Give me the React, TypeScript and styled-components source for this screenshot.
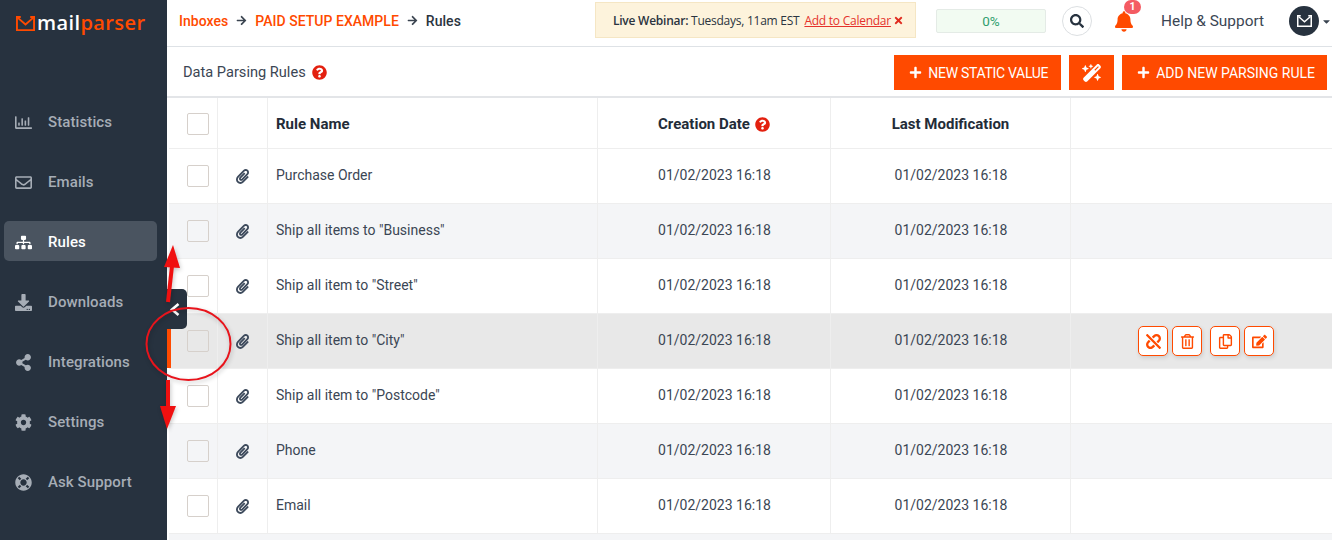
import React from "react";
import styled, { createGlobalStyle } from "styled-components";
import {
  FaArrowRight,
  FaBell,
  FaDownload,
  FaEdit,
  FaLifeRing,
  FaPaperclip,
  FaPlus,
  FaQuestionCircle,
  FaRegChartBar,
  FaRegCopy,
  FaRegEnvelope,
  FaRegTrashAlt,
  FaSearch,
  FaShareAlt,
  FaCog,
  FaSitemap,
  FaTimes,
  FaUnlink,
  FaCaretDown,
} from "react-icons/fa";
import { FaWandMagicSparkles } from "react-icons/fa6";

const orange = "#ff4a00";
const navy = "#27323f";

const Global = createGlobalStyle`
  html, body { margin: 0; padding: 0; height: 540px; overflow: hidden; background: #fff; }
  * { box-sizing: border-box; }
  body { font-family: Roboto, "Liberation Sans", sans-serif; color: #2b3440; }
`;

const Page = styled.div`
  position: relative;
  display: flex;
  width: 1332px;
  height: 540px;
  overflow: hidden;
`;

const Sidebar = styled.aside`
  flex: 0 0 167px;
  background: ${navy};
  display: flex;
  flex-direction: column;
`;

const LogoRow = styled.div`
  height: 101px;
  padding: 12px 0 0 16px;
  display: flex;
  align-items: flex-start;
  gap: 2px;
  svg { margin-top: 4px; }
`;

const LogoText = styled.div`
  font-family: "Open Sans", sans-serif;
  font-size: 20px;
  font-weight: 600;
  line-height: 22px;
  letter-spacing: 0.4px;
  color: #fff;
  span { color: ${orange}; }
`;

const Nav = styled.nav`
  display: flex;
  flex-direction: column;
  gap: 20px;
  padding: 0 10px 0 4px;
`;

const NavItem = styled.div<{ $active?: boolean }>`
  height: 40px;
  display: flex;
  align-items: center;
  gap: 16px;
  padding: 2px 0 0 11px;
  border-radius: 5px;
  font-size: 15px;
  font-weight: 500;
  letter-spacing: 0.1px;
  color: ${(p) => (p.$active ? "#fff" : "#a6adb6")};
  background: ${(p) => (p.$active ? "#4a5460" : "transparent")};
  svg { width: 17px; height: 17px; flex: none; }
`;

const Main = styled.main`
  flex: 1;
  min-width: 0;
  display: flex;
  flex-direction: column;
`;

const TopBar = styled.header`
  flex: none;
  height: 47px;
  display: flex;
  align-items: center;
  border-bottom: 1px solid #dee2e6;
  padding-left: 12px;
`;

const Crumbs = styled.div`
  display: flex;
  align-items: center;
  gap: 8px;
  width: 416px;
  margin-top: -5px;
  font-size: 14px;
  font-weight: 500;
  letter-spacing: 0.03px;
  color: ${orange};
  svg { width: 11px; height: 11px; color: #3a4450; }
  b { font-weight: 500; color: #2b3440; }
`;

const Webinar = styled.div`
  width: 321px;
  height: 36px;
  margin-top: -6px;
  display: flex;
  align-items: center;
  padding-left: 17px;
  background: #fdf3dc;
  border: 1px solid #f5e6c4;
  font-family: "Open Sans", sans-serif;
  font-size: 12px;
  letter-spacing: -0.25px;
  white-space: nowrap;
  b { font-weight: 600; }
  a { margin-left: 5px; color: #e5322c; text-decoration: underline; }
  svg { width: 9px; height: 11px; margin-left: 3px; color: #e02b1f; }
`;

const Progress = styled.div`
  width: 110px;
  height: 24px;
  margin: -4px 0 0 20px;
  display: flex;
  align-items: center;
  justify-content: center;
  background: #f2fbf2;
  border: 1px solid #e4ebe6;
  border-radius: 2px;
  font-size: 13.5px;
  color: #2f9e6e;
`;

const SearchBtn = styled.div`
  width: 30px;
  height: 30px;
  margin: -5px 0 0 16px;
  display: flex;
  align-items: center;
  justify-content: center;
  border: 1px solid #dcdfe2;
  border-radius: 50%;
  svg { width: 14px; height: 14px; color: #27323f; }
`;

const Bell = styled.div`
  position: relative;
  width: 20px;
  margin: -4px 0 0 22px;
  display: flex;
  justify-content: center;
  color: ${orange};
  svg { width: 18px; height: 21px; }
`;

const Badge = styled.span`
  position: absolute;
  top: 0;
  left: 10px;
  width: 17px;
  height: 14px;
  margin-top: -11px;
  border-radius: 8px;
  background: #f45b62;
  color: #fff;
  font-size: 10.5px;
  font-weight: 700;
  text-align: center;
  line-height: 14px;
`;

const Help = styled.div`
  margin: -4px 0 0 27px;
  font-size: 15.4px;
  color: #3b4654;
  white-space: nowrap;
`;

const Avatar = styled.div`
  width: 30px;
  height: 30px;
  margin: -4px 0 0 25px;
  border-radius: 50%;
  background: ${navy};
  display: flex;
  align-items: center;
  justify-content: center;
  flex: none;
`;

const Caret = styled(FaCaretDown)`
  width: 9px;
  height: 11px;
  margin: -3px 0 0 3px;
  color: #3a4450;
`;

const TitleBar = styled.div`
  flex: none;
  height: 51px;
  display: flex;
  align-items: center;
  padding: 2px 5px 0 16px;
  border-bottom: 2px solid #e3e5e8;
`;

const PageTitle = styled.div`
  flex: 1;
  display: flex;
  align-items: center;
  gap: 6px;
  font-size: 14.6px;
  color: #3b4654;
  padding-bottom: 1px;
  svg { width: 15px; height: 15px; color: #e3200f; }
`;

const ActionButton = styled.button<{ $tight?: boolean }>`
  height: 35px;
  margin-left: 8px;
  padding: 0 ${(p) => (p.$tight ? 13 : 12)}px 0 15px;
  display: flex;
  align-items: center;
  gap: 6px;
  border: 0;
  background: ${orange};
  color: #fff;
  font-family: Roboto, sans-serif;
  font-size: 14px;
  letter-spacing: ${(p) => (p.$tight ? "-0.3px" : "0")};
  white-space: nowrap;
  svg { width: 13px; height: 13px; }
`;

const MagicButton = styled(ActionButton)`
  width: 45px;
  padding: 0;
  justify-content: center;
  svg { width: 20px; height: 18px; }
`;

const Grid = "49px 50px 330px 233px 240px 1fr";

const Row = styled.div<{ $tone?: "plain" | "alt" | "hover" }>`
  position: relative;
  flex: none;
  height: 55px;
  margin-left: 2px;
  display: grid;
  grid-template-columns: ${Grid};
  border-bottom: 1px solid #eeeeee;
  background: ${(p) =>
    p.$tone === "hover" ? "#e8e8e8" : p.$tone === "alt" ? "#f4f5f7" : "#fff"};
`;

const Cell = styled.div<{ $center?: boolean }>`
  display: flex;
  align-items: center;
  justify-content: ${(p) => (p.$center ? "center" : "flex-start")};
  padding-left: ${(p) => (p.$center ? 0 : 8)}px;
  border-right: 1px solid #eeeeee;
  font-size: 14px;
  color: #3b4654;
  gap: 5px;
  white-space: nowrap;
  &:last-child { border-right: 0; }
`;

const TextCell = styled(Cell)`
  padding-bottom: 2px;
  ${(p) => (p.$center ? "padding-left: 1px;" : "")}
`;

const HeadCell = styled(Cell)`
  padding-top: 2px;
  font-size: 15px;
  font-weight: 700;
  color: #232c38;
`;

const HeadRow = styled(Row)`
  height: 51px;
`;

const Check = styled.span`
  width: 22px;
  height: 22px;
  margin-left: 9px;
  border: 1px solid #d6d0cb;
  border-radius: 2px;
  background: transparent;
`;

const Clip = styled(FaPaperclip)`
  width: 13px;
  height: 15px;
  color: #3d4a5c;
`;

const HelpIcon = styled(FaQuestionCircle)`
  width: 15px;
  height: 15px;
  color: #e3200f;
`;

const HoverMark = styled.span`
  position: absolute;
  left: -2px;
  top: 0;
  width: 4px;
  height: 100%;
  background: ${orange};
`;

const RowActions = styled.div`
  display: flex;
  align-items: center;
  padding: 0 0 0 63px;
  grid-column: 6;
`;

const IconBtn = styled.span<{ $gap?: number }>`
  width: 30px;
  height: 30px;
  margin-left: ${(p) => p.$gap ?? 4}px;
  display: flex;
  align-items: center;
  justify-content: center;
  background: #fff;
  border: 1px solid ${orange};
  border-radius: 5px;
  color: ${orange};
  box-shadow: 1px 2px 4px rgba(0, 0, 0, 0.12);
  svg { width: 15px; height: 15px; }
`;

const Collapse = styled.div`
  position: absolute;
  left: 167px;
  top: 289px;
  width: 20px;
  height: 40px;
  background: ${navy};
  border-radius: 0 5px 5px 0;
  display: flex;
  align-items: center;
  padding-left: 3px;
`;

const Annotation = styled.svg`
  position: absolute;
  left: 130px;
  top: 230px;
  width: 120px;
  height: 210px;
  pointer-events: none;
  filter: drop-shadow(1px 2px 2px rgba(0, 0, 0, 0.22));
`;

const rows = [
  "Purchase Order",
  'Ship all items to "Business"',
  'Ship all item to "Street"',
  'Ship all item to "City"',
  'Ship all item to "Postcode"',
  "Phone",
  "Email",
];

const navItems = [
  { label: "Statistics", icon: <FaRegChartBar /> },
  { label: "Emails", icon: <FaRegEnvelope /> },
  { label: "Rules", icon: <FaSitemap />, active: true },
  { label: "Downloads", icon: <FaDownload /> },
  { label: "Integrations", icon: <FaShareAlt /> },
  { label: "Settings", icon: <FaCog /> },
  { label: "Ask Support", icon: <FaLifeRing /> },
];

const Envelope = ({ size, color }: { size: number; color: string }) => (
  <svg width={size} height={size * 0.8} viewBox="0 0 20 16" fill="none" stroke={color} strokeWidth="2">
    <path d="M5 1H1v14h18V1h-4" />
    <path d="M2 2l8 7 8-7" />
  </svg>
);

export default function App() {
  return (
    <Page>
      <Global />
      <Sidebar>
        <LogoRow>
          <Envelope size={19} color={orange} />
          <LogoText>
            mail<span>parser</span>
          </LogoText>
        </LogoRow>
        <Nav>
          {navItems.map((item) => (
            <NavItem key={item.label} $active={item.active}>
              {item.icon}
              {item.label}
            </NavItem>
          ))}
        </Nav>
      </Sidebar>
      <Main>
        <TopBar>
          <Crumbs>
            Inboxes <FaArrowRight /> PAID SETUP EXAMPLE <FaArrowRight /> <b>Rules</b>
          </Crumbs>
          <Webinar>
            <b>Live Webinar:</b>&nbsp;Tuesdays, 11am EST <a>Add to Calendar</a>
            <FaTimes />
          </Webinar>
          <Progress>0%</Progress>
          <SearchBtn>
            <FaSearch />
          </SearchBtn>
          <Bell>
            <FaBell />
            <Badge>1</Badge>
          </Bell>
          <Help>Help &amp; Support</Help>
          <Avatar>
            <Envelope size={15} color="#fff" />
          </Avatar>
          <Caret />
        </TopBar>
        <TitleBar>
          <PageTitle>
            Data Parsing Rules <FaQuestionCircle />
          </PageTitle>
          <ActionButton $tight>
            <FaPlus /> NEW STATIC VALUE
          </ActionButton>
          <MagicButton>
            <FaWandMagicSparkles />
          </MagicButton>
          <ActionButton>
            <FaPlus /> ADD NEW PARSING RULE
          </ActionButton>
        </TitleBar>
        <HeadRow>
          <HeadCell $center>
            <Check />
          </HeadCell>
          <HeadCell />
          <HeadCell>Rule Name</HeadCell>
          <HeadCell $center>
            Creation Date <HelpIcon />
          </HeadCell>
          <HeadCell $center>Last Modification</HeadCell>
          <HeadCell />
        </HeadRow>
        {rows.map((name, i) => (
          <Row key={name} $tone={i === 3 ? "hover" : i % 2 === 1 ? "alt" : "plain"}>
            {i === 3 && <HoverMark />}
            <Cell $center>
              <Check />
            </Cell>
            <Cell $center>
              <Clip />
            </Cell>
            <TextCell>{name}</TextCell>
            <TextCell $center>01/02/2023 16:18</TextCell>
            <TextCell $center>01/02/2023 16:18</TextCell>
            {i === 3 ? (
              <RowActions>
                <IconBtn>
                  <FaUnlink />
                </IconBtn>
                <IconBtn>
                  <FaRegTrashAlt />
                </IconBtn>
                <IconBtn $gap={8}>
                  <FaRegCopy />
                </IconBtn>
                <IconBtn>
                  <FaEdit />
                </IconBtn>
              </RowActions>
            ) : (
              <Cell />
            )}
          </Row>
        ))}
        <Row $tone="alt" />
      </Main>
      <Collapse>
        <svg width="10" height="13" viewBox="0 0 10 13" fill="none" stroke="#fff" strokeWidth="2.6">
          <path d="M8.5 1L2 6.5l6.5 5.5" />
        </svg>
      </Collapse>
      <Annotation viewBox="0 0 120 210" fill="none">
        <ellipse cx="58.5" cy="114" rx="42" ry="36" stroke="#e8141c" strokeWidth="2" />
        <path d="M38 72l4-36" stroke="#f01010" strokeWidth="4" />
        <path d="M34 37l9-22 7 23z" fill="#f01010" />
        <path d="M38 150v28" stroke="#f01010" strokeWidth="4" />
        <path d="M30 176h16l-9 23z" fill="#f01010" />
      </Annotation>
    </Page>
  );
}
